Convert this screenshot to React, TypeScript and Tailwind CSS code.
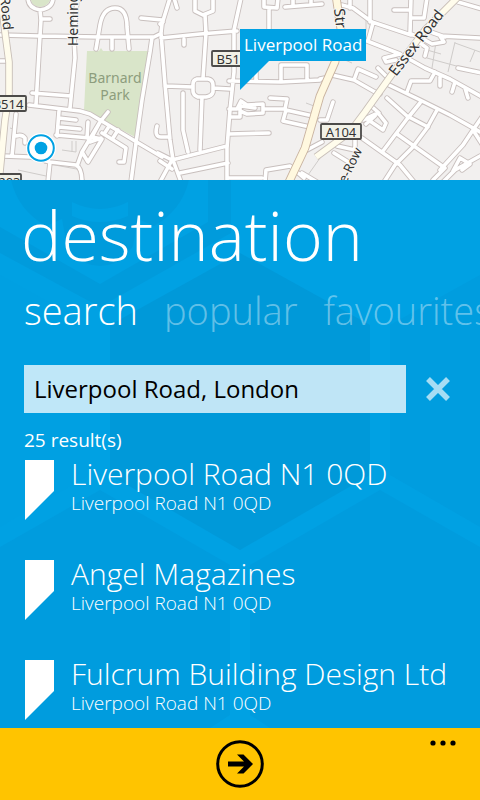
const tabs = ["search", "popular", "favourites"];

const results = [
  { name: "Liverpool Road N1 0QD", address: "Liverpool Road N1 0QD" },
  { name: "Angel Magazines", address: "Liverpool Road N1 0QD" },
  { name: "Fulcrum Building Design Ltd", address: "Liverpool Road N1 0QD" },
];

const lanes = [
  "M44 163L82 170M80 168L84 180M17 130L10 128M72 141V152M62 150L76 152V141M18 170L46 176",
  "M436 42L432 68M455 42L448 72M475 50L470 62M427 50L441 54M427 58L460 67M455 43L480 52M345 60L352 63M306 103L314 106M320 158L308 175M366 20V30L362 45",
].join("");

const streets = [
  "M0 35L40 36L100 37L154 37L160 34",
  "M28 -2Q28 8 40 10Q53 8 53 -2M40 10L41 20L40 36L38 70L36 105M41 19L50 19",
  "M77 0L74 37L75 58L70 108",
  "M96 49L100 25Q103 8 115 8Q127 8 127 27L129 49M112 38V49M141 18L162 20",
  "M152 38L150 52L142 100L136 143L131 182",
  "M0 61H7M32 93L71 96M29 105L80 111L90 114L135 141L162 157",
  "M59 111L57 136M59 118L76 120M59 127L80 129M56 135L90 138",
  "M16 114L12 156M16 136Q22 134 25 138V143M3 156L30 157L50 162L76 165Q82 168 82 182M50 162L48 182",
  "M108 112L100 122L82 152L77 166M88 122L87 138M100 122L92 137L102 139L88 162L82 152M101 138L90 142",
  "M102 133L126 148L124 162L119 162M113 138L118 130M108 128L104 134M157 126Q154 137 161 137",
  "M170 -2L162 24L161 33L165 84L170 140L173 160L181 182M174 -2L177 8M160 24L163 22",
  "M161 38L200 34L237 31M184 39V45M195 -2V11L203 15L213 11V-2M205 15L206 33L203 78",
  "M241 -2L234 30V72L230 110L227 148V182",
  "M197 79H208Q213 80 213 85V92Q212 96 206 97H198Q193 95 193 91V84Q193 80 197 79M165 86L193 87M213 88L230 89M202 97L200 150",
  "M183 93V130L188 152M172 160L227 146M180 173L228 163M160 137H168M172 160L160 182M172 160L158 153",
  "M229 134L269 133M229 81L281 82L320 80M256 70V81M281 82V65H307V80M320 79L330 77",
  "M229 109H237L241 101L247 105L263 104V113L247 114L240 111V104M241 106L255 108M231 117H240V112M263 109H285L287 99L270 98M286 110L313 116M286 110L283 121L310 127",
  "M264 -2V7L277 8L278 -2M269 8V30M285 7L322 4M293 -2V6M311 -2V4",
  "M305 151L322 142M265 182L266 170L290 166L304 178M227 178H262M160 161L172 169M317 182L302 173",
  "M342 5L353 8L372 22L411 35M350 -2V8M370 -2V22M373 23L368 41M394 10H410M411 -2L410 33M411 18H424L427 -2",
  "M458 2L482 9M411 34L425 40L432 44L444 42L440 36L480 38M425 30L445 37M367 41L400 54L425 68L450 79L482 97M458 68L482 73",
  "M332 75L354 80L375 92M354 80L358 69L376 77M375 92L380 94M400 54L384 58L386 62L396 60M378 68L388 78",
  "M387 84L420 100L450 115L482 133M407 92L411 81L430 81L435 72M425 56L427 48L420 43M440 77V86M455 82L452 92M465 88L468 98",
  "M387 98L407 116L428 127M420 103L407 119L383 151M437 110L427 128L412 148L395 165L384 182M397 134L445 168M362 138L400 165L414 182",
  "M440 170L463 145L473 130L482 117M473 130L482 144M363 120L378 113L386 123L383 130L367 119M371 106L379 113M366 124L375 116",
  "M333 102L327 120H320M443 182L455 170L480 156M453 171L460 158L470 164L462 170M445 168L433 180M334 153L350 163M355 140V150L337 146",
].join("");

const mainRoads = "M336 -4L341 30L335 62L320 96L305 148L288 184";
const paleRoads =
  "M1 -3L5 32L9 62L9 95L5 120L-1 182M460 -5L425 30L395 70L365 112L350 132L316 157";

function RoadBadge({ x, y, width, label }: { x: number; y: number; width: number; label: string }) {
  return (
    <g>
      <rect x={x} y={y} width={width} height="15" rx="1" fill="#f1f1e7" stroke="#4c4b49" strokeWidth="1.8" />
      <text x={x + width / 2} y={y + 12.5} textAnchor="middle" fontSize="13" fill="#333">
        {label}
      </text>
    </g>
  );
}

function StreetMap() {
  return (
    <svg
      viewBox="0 0 480 180"
      preserveAspectRatio="xMidYMid slice"
      className="block h-full w-full font-['Noto_Sans',sans-serif]"
      role="img"
      aria-label="Map of Liverpool Road"
    >
      <rect width="480" height="180" fill="#f2f0ef" />
      <path d="M87 51H99L101 48L103 51H149L135 137L84 110Z" fill="#d9e5c9" />
      <path d="M31 0Q32 6 40 7Q48 6 50 0Z" fill="#d9e5c9" />
      <g fill="none" strokeLinejoin="round">
        <path d={lanes} stroke="#cfccca" strokeWidth="1" />
        <path d={streets} stroke="#c8bfbd" strokeWidth="5.4" strokeLinecap="round" />
        <path d={streets} stroke="#fff" strokeWidth="3.6" strokeLinecap="round" />
        <path d={paleRoads} stroke="#c8bfb8" strokeWidth="7.5" />
        <path d={paleRoads} stroke="#fffcec" strokeWidth="5.7" />
        <path d={mainRoads} stroke="#c9b3a0" strokeWidth="8.6" />
        <path d={mainRoads} stroke="#fff8df" strokeWidth="6.8" />
      </g>
      <g fontSize="14" fill="#333" stroke="#f7f6f4" strokeWidth="2" paintOrder="stroke">
        <text transform="translate(78 46) rotate(-90)">Heming</text>
        <text transform="translate(0 -3) rotate(84)">Road</text>
        <text transform="translate(334 9) rotate(84)" fontSize="15">Str</text>
        <text transform="translate(396 77) rotate(-52)" fontSize="15">Essex Road</text>
        <text transform="translate(346 184) rotate(-64)" fontSize="13">e-Row</text>
      </g>
      <g fontSize="14" fill="#8d9d7d" textAnchor="middle">
        <text x="115" y="83">Barnard</text>
        <text x="115" y="100">Park</text>
      </g>
      <RoadBadge x={-10} y={96} width={36} label="B514" />
      <RoadBadge x={-18} y={174} width={39} label="A5203" />
      <RoadBadge x={212} y={51} width={40} label="B515" />
      <RoadBadge x={321} y={124} width={40} label="A104" />
      <circle cx="41" cy="148" r="15" fill="#fff" />
      <circle cx="41" cy="148" r="12.8" fill="#fff" stroke="#00a1e3" strokeWidth="2" />
      <circle cx="41" cy="148" r="6.3" fill="#00a1e3" />
    </svg>
  );
}

function HexPattern() {
  return (
    <svg
      viewBox="0 0 480 548"
      preserveAspectRatio="xMidYMin slice"
      className="absolute inset-0 h-full w-full"
      aria-hidden="true"
    >
      <path d="M0 47L100 104L208 42V0H231V53L100 127L0 73Z" fill="#009bdc" />
      <path
        d="M11 0Q18 30 46 46L62 39L67 66Q80 86 100 86Q120 86 133 66L138 39L154 46Q182 30 189 0ZM72 22Q100 36 128 22V36Q100 48 72 36Z"
        fill="#009bdc"
        fillRule="evenodd"
      />
      <path d="M240 73L370 145V295L240 370L110 295V145Z" fill="#0099d9" />
      <path d="M480 95L390 145V295L480 347Z" fill="#009ddf" />
      <path d="M380 310L480 367V548H270L250 535V385ZM100 310L230 385V535L210 548H0V367Z" fill="#009cde" />
      <path d="M0 347L90 295V145L0 95Z" fill="#00a0e2" />
    </svg>
  );
}

export default function App() {
  return (
    <div className="flex min-h-screen flex-col overflow-hidden bg-[#00a1e3] font-['Open_Sans','Noto_Sans',sans-serif] text-white">
      <header className="relative h-[180px]">
        <StreetMap />
        <div className="absolute top-[29px] left-1/2">
          <div className="flex h-8 items-center bg-[#00a1e3] px-1 text-[17px]">Liverpool Road</div>
          <svg width="29" height="29" viewBox="0 0 29 29" className="block" aria-hidden="true">
            <path d="M0 0H29L0 29Z" fill="#00a1e3" />
          </svg>
        </div>
      </header>

      <main className="relative flex-1 overflow-hidden">
        <HexPattern />
        <div className="relative">
          <h1 className="px-[21px] pt-[15px] text-[68px] leading-[80px] font-[350]">destination</h1>
          <nav className="flex gap-[26px] overflow-hidden pt-[13px] pl-6 text-[38px] leading-[44px] font-light">
            {tabs.map((tab, i) => (
              <a key={tab} href={`#${tab}`} className={i === 0 ? "text-white" : "text-white/40"}>
                {tab}
              </a>
            ))}
          </nav>

          <form className="flex items-center pt-[33px] pr-[30px] pl-6">
            <input
              type="text"
              aria-label="Destination"
              defaultValue="Liverpool Road, London"
              className="h-12 min-w-0 flex-1 bg-white/75 px-[10px] pb-[2px] text-[24px] text-black outline-none"
            />
            <button type="reset" aria-label="Clear" className="ml-5 text-white/65">
              <svg width="24" height="24" viewBox="0 0 24 24" stroke="currentColor" strokeWidth="5.5">
                <path d="M2 2L22 22M22 2L2 22" />
              </svg>
            </button>
          </form>

          <p className="px-6 pt-[15px] text-[19px] leading-6">25 result(s)</p>

          <ul className="flex flex-col gap-10 pt-2 pl-[25px]">
            {results.map((r) => (
              <li key={r.name} className="h-[60px]">
                <a href="#result" className="flex gap-[17px] font-light whitespace-nowrap">
                  <svg width="29" height="60" viewBox="0 0 29 60" className="shrink-0" fill="white" aria-hidden="true">
                    <path d="M0 0H29V31L0 60Z" />
                  </svg>
                  <span className="flex flex-col">
                    <span className="text-[30px] leading-7">{r.name}</span>
                    <span className="text-[19px] leading-[30px]">{r.address}</span>
                  </span>
                </a>
              </li>
            ))}
          </ul>
        </div>
      </main>

      <footer className="relative flex h-[72px] items-center justify-center bg-[#ffc400] text-black">
        <button type="button" aria-label="Go">
          <svg width="48" height="48" viewBox="0 0 48 48">
            <circle cx="24" cy="24" r="22.3" fill="none" stroke="currentColor" strokeWidth="3" />
            <path d="M12 21.5H28L21 14.5H27.5L37 24L27.5 33.5H21L28 26.5H12Z" fill="currentColor" />
          </svg>
        </button>
        <button type="button" aria-label="More" className="absolute top-3 right-6">
          <svg width="26" height="6" viewBox="0 0 26 6" fill="currentColor">
            <circle cx="3" cy="3" r="2.6" />
            <circle cx="13" cy="3" r="2.6" />
            <circle cx="23" cy="3" r="2.6" />
          </svg>
        </button>
      </footer>
    </div>
  );
}
